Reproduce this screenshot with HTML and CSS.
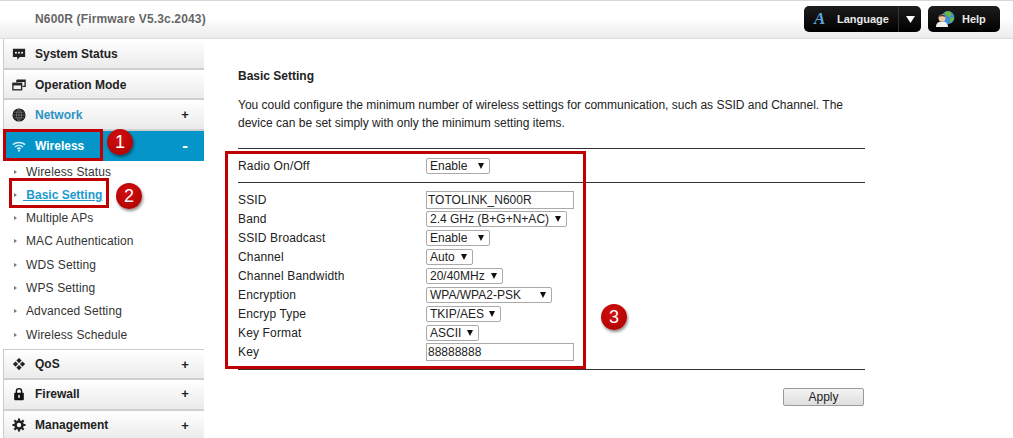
FILE: index.html
```html
<!DOCTYPE html>
<html lang="en">
<head>
<meta charset="utf-8">
<title>N600R Basic Setting</title>
<link rel="stylesheet" href="styles.css">
</head>
<body>
<header class="topbar">
  <div class="brand">N600R (Firmware V5.3c.2043)</div>
  <div class="top-actions">
    <div class="dark-btn lang-btn">
      <span class="lang-a">A</span><span class="lang-label">Language</span><span class="lang-caret"><svg width="9" height="7" viewBox="0 0 9 7"><path d="M0 0h9L4.500 7z" fill="#fff"/></svg></span>
    </div>
    <div class="dark-btn help-btn">
      <svg width="19" height="18" viewBox="0 0 19 18"><circle cx="12" cy="7.500" r="6.500" fill="#3b8fd8"/><path d="M9 2l4-1 3 3-2 3-3-1-2-2zM14 8l3-1 1 2-3 4-1-2z" fill="#6cb83a"/><circle cx="6" cy="8" r="3.500" fill="#f0c8a0"/><path d="M0 17c0-4 2.500-5.500 6-5.500s6 1.500 6 5.500z" fill="#f4f1ea"/><path d="M2.500 7c0-3 7-3 7 0-2-1-5-1-7 0z" fill="#5a3a20"/></svg>
      <span>Help</span>
    </div>
  </div>
</header>
<div class="layout">
  <nav class="sidebar">
    <div class="menu menu-top">
      <svg class="ico" viewBox="0 0 16 16"><path d="M1 2h14v9.500H9l-3 3v-3H1z" fill="#222"/><circle cx="4.500" cy="6.500" r="1.100" fill="#fff"/><circle cx="8" cy="6.500" r="1.100" fill="#fff"/><circle cx="11.500" cy="6.500" r="1.100" fill="#fff"/></svg>
      <span>System Status</span>
    </div>
    <div class="menu menu-top">
      <svg class="ico" viewBox="0 0 16 16"><path d="M5.500 2.500h9.500v7h-3M5.500 2.500v2.500M5.500 3.800H15" fill="none" stroke="#222" stroke-width="1.500"/><rect x="1" y="6" width="10" height="7.500" fill="none" stroke="#222" stroke-width="1.500"/><path d="M1 7.500h10" stroke="#222" stroke-width="2"/></svg>
      <span>Operation Mode</span>
    </div>
    <div class="menu menu-net">
      <svg class="ico" viewBox="0 0 16 16"><circle cx="8" cy="8" r="7.500" fill="#1a1a1a"/><path d="M8 .5v15M.5 8h15M2 4.800h12M2 11.200h12M8 .5c-3.800 3-3.800 12 0 15M8 .5c3.800 3 3.800 12 0 15" fill="none" stroke="#999" stroke-width=".6"/></svg>
      <span>Network</span><b class="sign">+</b>
    </div>
    <div class="menu menu-active">
      <svg class="ico" viewBox="0 0 16 16"><g fill="none" stroke="#d5edf7" stroke-width="1.900"><path d="M1 6.500c3.800-3.300 10.200-3.300 14 0"/><path d="M3.500 9c2.500-2.100 6.500-2.100 9 0"/><path d="M6 11.300c1.200-1 2.800-1 4 0"/></g><circle cx="8" cy="13.300" r="1.200" fill="#d5edf7"/></svg>
      <span>Wireless</span><b class="sign">-</b>
    </div>
    <ul class="submenu">
      <li>Wireless Status</li>
      <li class="current"><a>&nbsp;Basic Setting</a></li>
      <li>Multiple APs</li>
      <li>MAC Authentication</li>
      <li>WDS Setting</li>
      <li>WPS Setting</li>
      <li>Advanced Setting</li>
      <li>Wireless Schedule</li>
    </ul>
    <div class="menu menu-qos">
      <svg class="ico" viewBox="0 0 16 16"><path d="M8 1l3 3-3 3-3-3zM4 5l3 3-3 3-3-3zM12 5l3 3-3 3-3-3zM8 9l3 3-3 3-3-3z" fill="#222"/></svg>
      <span>QoS</span><b class="sign">+</b>
    </div>
    <div class="menu menu-fw">
      <svg class="ico" viewBox="0 0 16 16"><path d="M5 7V4.800a3 3 0 0 1 6 0V7" fill="none" stroke="#111" stroke-width="1.600"/><rect x="2.500" y="6.500" width="11" height="8.500" rx="1" fill="#111"/><rect x="7.200" y="9" width="1.600" height="3.500" fill="#fff"/></svg>
      <span>Firewall</span><b class="sign">+</b>
    </div>
    <div class="menu menu-mgmt">
      <svg class="ico" viewBox="0 0 16 16"><circle cx="8" cy="8" r="4" fill="none" stroke="#222" stroke-width="3"/><path d="M8 .5v3M8 12.500v3M.5 8h3M12.500 8h3M2.700 2.700l2.100 2.100M11.200 11.200l2.100 2.100M2.700 13.300l2.100-2.100M11.200 4.800l2.100-2.100" stroke="#222" stroke-width="2.400"/></svg>
      <span>Management</span><b class="sign">+</b>
    </div>
  </nav>
  <main class="content">
    <h1 class="title">Basic Setting</h1>
    <p class="intro">You could configure the minimum number of wireless settings for communication, such as SSID and Channel. The device can be set simply with only the minimum setting items.</p>
    <div class="form-group radio-group">
      <div class="row"><label>Radio On/Off</label><span class="sel w64">Enable</span></div>
    </div>
    <div class="form-group main-group">
      <div class="row"><label>SSID</label><span class="txt">TOTOLINK_N600R</span></div>
      <div class="row"><label>Band</label><span class="sel w141">2.4 GHz (B+G+N+AC)</span></div>
      <div class="row"><label>SSID Broadcast</label><span class="sel w64">Enable</span></div>
      <div class="row"><label>Channel</label><span class="sel w47">Auto</span></div>
      <div class="row"><label>Channel Bandwidth</label><span class="sel w77">20/40MHz</span></div>
      <div class="row"><label>Encryption</label><span class="sel w126">WPA/WPA2-PSK</span></div>
      <div class="row"><label>Encryp Type</label><span class="sel w75">TKIP/AES</span></div>
      <div class="row"><label>Key Format</label><span class="sel w53">ASCII</span></div>
      <div class="row"><label>Key</label><span class="txt">88888888</span></div>
    </div>
    <div class="actions"><span class="apply">Apply</span></div>
  </main>
</div>
<div class="callout box-1"></div>
<div class="callout box-2"></div>
<div class="callout box-3"></div>
<div class="badge badge-1">1</div>
<div class="badge badge-2">2</div>
<div class="badge badge-3">3</div>
</body>
</html>
```

FILE: styles.css
```css
* { box-sizing: border-box; }
html, body { margin: 0; padding: 0; }
body {
  position: relative;
  width: 1013px;
  height: 438px;
  overflow: hidden;
  background: #fff;
  font-family: "Liberation Sans", Arial, sans-serif;
  font-size: 12px;
  color: #222;
}
.topbar {
  height: 39px;
  display: flex;
  justify-content: space-between;
  align-items: flex-start;
  padding: 6px 13px 0 35px;
  border-top: 1px solid #d8d8d8;
  border-bottom: 1px solid #dcdcdc;
  background: linear-gradient(#fff 45%, #ececec);
}
.brand {
  margin-top: 5px;
  font-weight: bold;
  color: #666;
  line-height: 14px;
  letter-spacing: .15px;
}
.top-actions { display: flex; gap: 7px; }
.dark-btn {
  height: 26px;
  margin-top: -1px;
  display: flex;
  align-items: center;
  border-radius: 5px;
  background: linear-gradient(#1d1d1d, #000);
  color: #e8e8e8;
  font-size: 11px;
  font-weight: bold;
}
.lang-btn { width: 117px; }
.lang-a {
  width: 33px;
  padding-left: 10px;
  font-family: "Liberation Serif", serif;
  font-style: italic;
  font-size: 17px;
  color: #5aa5dc;
}
.lang-label { width: 61px; }
.lang-caret {
  flex: 1;
  height: 26px;
  display: flex;
  align-items: center;
  justify-content: center;
  border-left: 1px solid #333;
}
.help-btn { width: 72px; padding-left: 8px; gap: 7px; }
.layout { display: flex; }
.sidebar { width: 201px; margin-left: 3px; flex: none; }
.menu {
  height: 30.670px;
  padding: 0 15px 0 8px;
  display: flex;
  align-items: center;
  border-left: 1px solid #ccc;
  border-bottom: 2px solid #cfcfcf;
  background: linear-gradient(#fff, #ebebeb);
  font-weight: bold;
  color: #222;
}
.menu-top { padding-top: 2px; }
.ico { width: 14px; height: 14px; margin-right: 9px; flex: none; }
.menu span { flex: 1; }
.sign { width: 8px; text-align: center; font-size: 13px; }
.menu-net { color: #2a93c4; }
.menu-net .sign { color: #222; }
.menu-active {
  height: 30px;
  border: 0;
  padding-left: 9px;
  background: #0595c8;
  color: #fff;
}
.menu-active .sign { font-size: 17px; }
.submenu {
  list-style: none;
  margin: 0;
  padding: .6px 0 0;
  height: 188px;
}
.submenu li {
  height: 23.300px;
  line-height: 20px;
  padding-left: 23px;
  position: relative;
  color: #333;
  letter-spacing: .12px;
}
.submenu li::before {
  content: "";
  position: absolute;
  left: 11px;
  top: 8px;
  border-left: 3px solid #777;
  border-top: 2px solid transparent;
  border-bottom: 2px solid transparent;
}
.current a {
  margin-left: -3px;
  color: #1c9ad0;
  text-decoration: underline;
  font-weight: bold;
  letter-spacing: 0;
}
.menu-qos { border-top: 1px solid #ccc; height: 31px; padding-top: 1px; }
.menu-fw { padding-bottom: 1px; }
.menu-mgmt { padding-top: 1px; }
.content { width: 627px; margin-left: 34px; flex: none; }
.title {
  margin: 30px 0 0;
  font-size: 12px;
  line-height: 14px;
  font-weight: bold;
  color: #222;
}
.intro { margin: 13px 0 0; line-height: 18px; color: #222; }
.form-group { border-top: 1px solid #333; }
.radio-group { margin-top: 16px; padding: 7px 0; }
.main-group { padding: 7px 0 8px; border-bottom: 1px solid #333; }
.row {
  height: 19px;
  display: flex;
  align-items: center;
}
.row label { width: 188px; flex: none; letter-spacing: .15px; }
.sel {
  position: relative;
  height: 16px;
  line-height: 14px;
  padding-left: 3px;
  border: 1px solid #aaa;
  border-radius: 2px;
  background: #fff;
  color: #222;
}
.sel::after {
  content: "";
  position: absolute;
  right: 5px;
  top: 4px;
  border-top: 6px solid #111;
  border-left: 3.500px solid transparent;
  border-right: 3.500px solid transparent;
}
.w64 { width: 64px; }
.w141 { width: 141px; }
.w47 { width: 47px; }
.w77 { width: 77px; }
.w126 { width: 126px; }
.w75 { width: 75px; }
.w53 { width: 53px; }
.txt {
  width: 148px;
  height: 18px;
  line-height: 16px;
  padding-left: 1px;
  border: 1px solid #aaa;
  background: #fff;
}
.actions { display: flex; justify-content: flex-end; margin-top: 18px; padding-right: 1px; }
.apply {
  width: 81px;
  height: 18px;
  line-height: 16px;
  text-align: center;
  border: 1px solid #999;
  border-radius: 2px;
  background: linear-gradient(#f4f4f4, #dedede);
  color: #222;
}
.callout { position: absolute; border: 3px solid #c00000; }
.box-1 { left: 3px; top: 129px; width: 100px; height: 32px; }
.box-2 { left: 9px; top: 178px; width: 100px; height: 30px; }
.box-3 { left: 225px; top: 151px; width: 361px; height: 218px; }
.badge {
  position: absolute;
  width: 26px;
  height: 26px;
  border-radius: 50%;
  background: radial-gradient(circle at 45% 35%, #d40f0f, #a80000);
  box-shadow: 1px 2px 3px rgba(0, 0, 0, .45);
  color: #fff;
  font-size: 18px;
  line-height: 26px;
  text-align: center;
}
.badge-1 { left: 107px; top: 129px; }
.badge-2 { left: 116px; top: 183px; }
.badge-3 { left: 601px; top: 304px; }
```
